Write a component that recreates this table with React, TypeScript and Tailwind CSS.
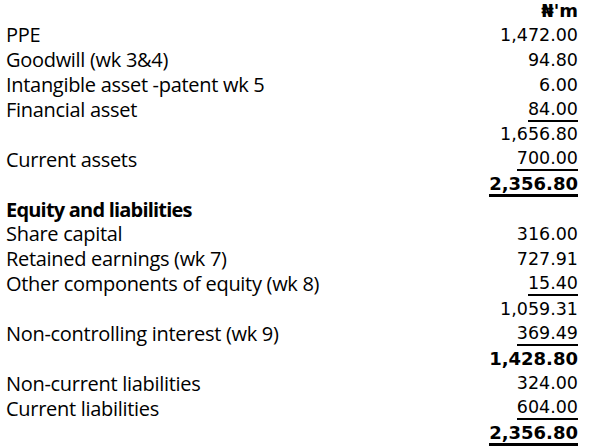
type Row = {
  label?: string;
  amount?: string;
  bold?: boolean;
  heading?: boolean;
  line?: boolean;
};

const rows: Row[] = [
  { amount: "₦'m", bold: true },
  { label: "PPE", amount: "1,472.00" },
  { label: "Goodwill (wk 3&4)", amount: "94.80" },
  { label: "Intangible asset -patent wk 5", amount: "6.00" },
  { label: "Financial asset", amount: "84.00", line: true },
  { amount: "1,656.80" },
  { label: "Current assets", amount: "700.00", line: true },
  { amount: "2,356.80", bold: true, line: true },
  { label: "Equity and liabilities", heading: true },
  { label: "Share capital", amount: "316.00" },
  { label: "Retained earnings (wk 7)", amount: "727.91" },
  { label: "Other components of equity (wk 8)", amount: "15.40", line: true },
  { amount: "1,059.31" },
  { label: "Non-controlling interest (wk 9)", amount: "369.49", line: true },
  { amount: "1,428.80", bold: true },
  { label: "Non-current liabilities", amount: "324.00" },
  { label: "Current liabilities", amount: "604.00", line: true },
  { amount: "2,356.80", bold: true, line: true },
];

export default function App() {
  return (
    <div className="w-[590px] h-[448px] bg-white text-black pl-[6px] pr-[12px] -mt-[2px]">
      {rows.map((r, i) => (
        <div key={i} className="flex h-[24.9px] items-center justify-between">
          <span
            className={
              r.heading
                ? "font-['Open_Sans',sans-serif] text-[20px] font-bold leading-none tracking-[-0.8px]"
                : "font-['Open_Sans',sans-serif] text-[20px] leading-none tracking-[-0.3px]"
            }
          >
            {r.label}
          </span>
          {r.amount && (
            <span
              className={
                (r.bold ? "font-bold text-[18px] " : "text-[17.5px] ") +
                (r.line ? (r.bold ? "border-b-[3px] border-black " : "border-b-2 border-black ") : "") +
                "font-['DejaVu_Sans',sans-serif] leading-[21px]"
              }
            >
              {r.amount}
            </span>
          )}
        </div>
      ))}
    </div>
  );
}
